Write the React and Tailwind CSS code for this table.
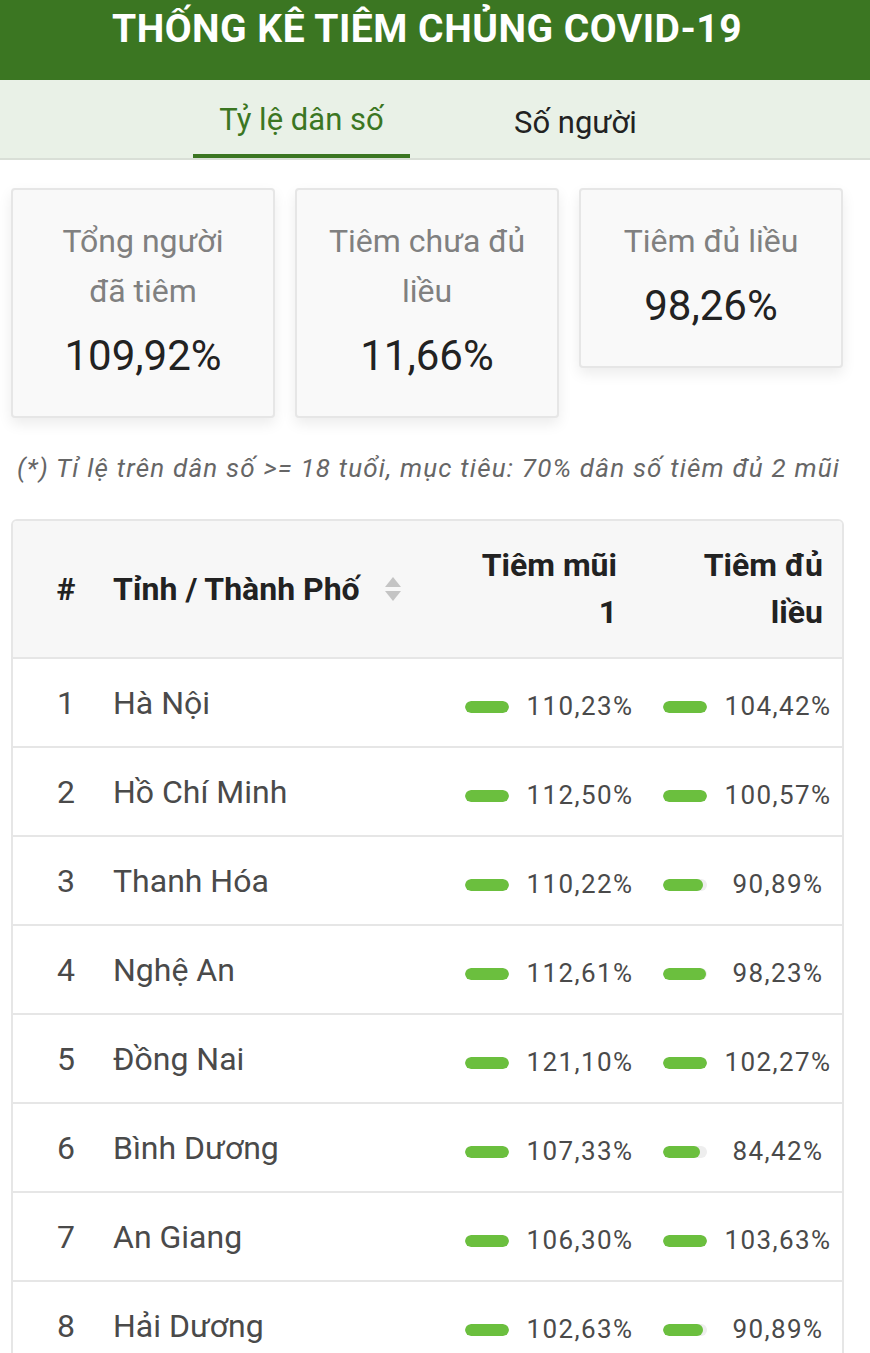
import React from 'react';

const rows = [
  { id: 1, name: 'Hà Nội', first: 110.23, full: 104.42 },
  { id: 2, name: 'Hồ Chí Minh', first: 112.5, full: 100.57 },
  { id: 3, name: 'Thanh Hóa', first: 110.22, full: 90.89 },
  { id: 4, name: 'Nghệ An', first: 112.61, full: 98.23 },
  { id: 5, name: 'Đồng Nai', first: 121.1, full: 102.27 },
  { id: 6, name: 'Bình Dương', first: 107.33, full: 84.42 },
  { id: 7, name: 'An Giang', first: 106.3, full: 103.63 },
  { id: 8, name: 'Hải Dương', first: 102.63, full: 90.89 },
];

const fmt = (v) => v.toFixed(2).replace('.', ',') + '%';

function Bar({ value }) {
  return (
    <div className="w-[44px] h-[12px] rounded-full bg-[#eeeeee] overflow-hidden shrink-0">
      <div className="h-full rounded-full bg-[#6bbf3e]" style={{ width: `${Math.min(value, 100)}%` }} />
    </div>
  );
}

function StatCard({ label, value }) {
  return (
    <div className="w-[264px] bg-[#f9f9f9] border-2 border-[#e6e6e6] rounded-[4px] shadow-[0_6px_14px_rgba(0,0,0,0.08)] px-[20px] pt-[26px] pb-[35px] text-center">
      <div className="text-[32px] leading-[50px] text-[#808080] whitespace-pre-line">{label}</div>
      <div className="mt-[15px] text-[42px] leading-[50px] text-[#222]">{value}</div>
    </div>
  );
}

function SortIcon() {
  return (
    <svg width="18" height="28" viewBox="0 0 18 28" className="ml-[24px]">
      <path d="M9 2 L17 12 L1 12 Z" fill="#c4c4c4" />
      <path d="M9 26 L17 16 L1 16 Z" fill="#c4c4c4" />
    </svg>
  );
}

export default function App() {
  return (
    <div className="w-[870px] min-h-[1353px] bg-white font-['Roboto',sans-serif] overflow-hidden">
      <div className="h-[80px] bg-[#3b7622] text-center pr-[16px]">
        <h1 className="text-white font-bold text-[39px] leading-[58px] tracking-[0.5px]">THỐNG KÊ TIÊM CHỦNG COVID-19</h1>
      </div>

      <div className="h-[80px] bg-[#e9f1e7] border-b-2 border-[#d9dfd7] flex pl-[193px]">
        <div className="w-[217px] h-full flex items-center justify-center border-b-4 border-[#3b7622] text-[31px] text-[#3b7622] pt-[6px]">
          Tỷ lệ dân số
        </div>
        <div className="ml-[77px] px-[27px] h-full flex items-center justify-center text-[31px] text-[#222] pt-[8px]">
          Số người
        </div>
      </div>

      <div className="flex items-start gap-[20px] pl-[11px] mt-[28px]">
        <StatCard label={'Tổng người\nđã tiêm'} value="109,92%" />
        <StatCard label={'Tiêm chưa đủ\nliều'} value="11,66%" />
        <StatCard label="Tiêm đủ liều" value="98,26%" />
      </div>

      <p className="mt-[32px] pl-[17px] italic text-[26px] tracking-[1.2px] text-[#666] leading-[36px] whitespace-nowrap">
        (*) Tỉ lệ trên dân số &gt;= 18 tuổi, mục tiêu: 70% dân số tiêm đủ 2 mũi
      </p>

      <div className="mt-[33px] ml-[11px] w-[833px] border-2 border-[#e6e6e6] rounded-t-[6px] overflow-hidden">
        <div className="grid grid-cols-[100px_342px_198px_1fr] items-center h-[138px] bg-[#f7f7f7] border-b-2 border-[#e6e6e6] text-[32px] font-bold text-[#222]">
          <div className="text-center pl-[6px]">#</div>
          <div className="flex items-center">
            <span>Tỉnh / Thành Phố</span>
            <SortIcon />
          </div>
          <div className="text-right pr-[36px] leading-[47px]">Tiêm mũi<br />1</div>
          <div className="text-right pr-[19px] leading-[47px]">Tiêm đủ<br />liều</div>
        </div>
        {rows.map((r) => (
          <div key={r.id} className="grid grid-cols-[100px_342px_198px_1fr] items-center h-[89px] border-b-2 border-[#e6e6e6] text-[#4a4a4a]">
            <div className="text-center pl-[6px] text-[32px]">{r.id}</div>
            <div className="text-[32px]">{r.name}</div>
            <div className="flex items-center pl-[10px] pt-[8px]">
              <Bar value={r.first} />
              <span className="ml-[8px] w-[126px] text-center text-[26px] tracking-[1.4px]">{fmt(r.first)}</span>
            </div>
            <div className="flex items-center pl-[10px] pt-[8px]">
              <Bar value={r.full} />
              <span className="ml-[8px] w-[126px] text-center text-[26px] tracking-[1.4px] whitespace-nowrap">{fmt(r.full)}</span>
            </div>
          </div>
        ))}
      </div>
    </div>
  );
}
